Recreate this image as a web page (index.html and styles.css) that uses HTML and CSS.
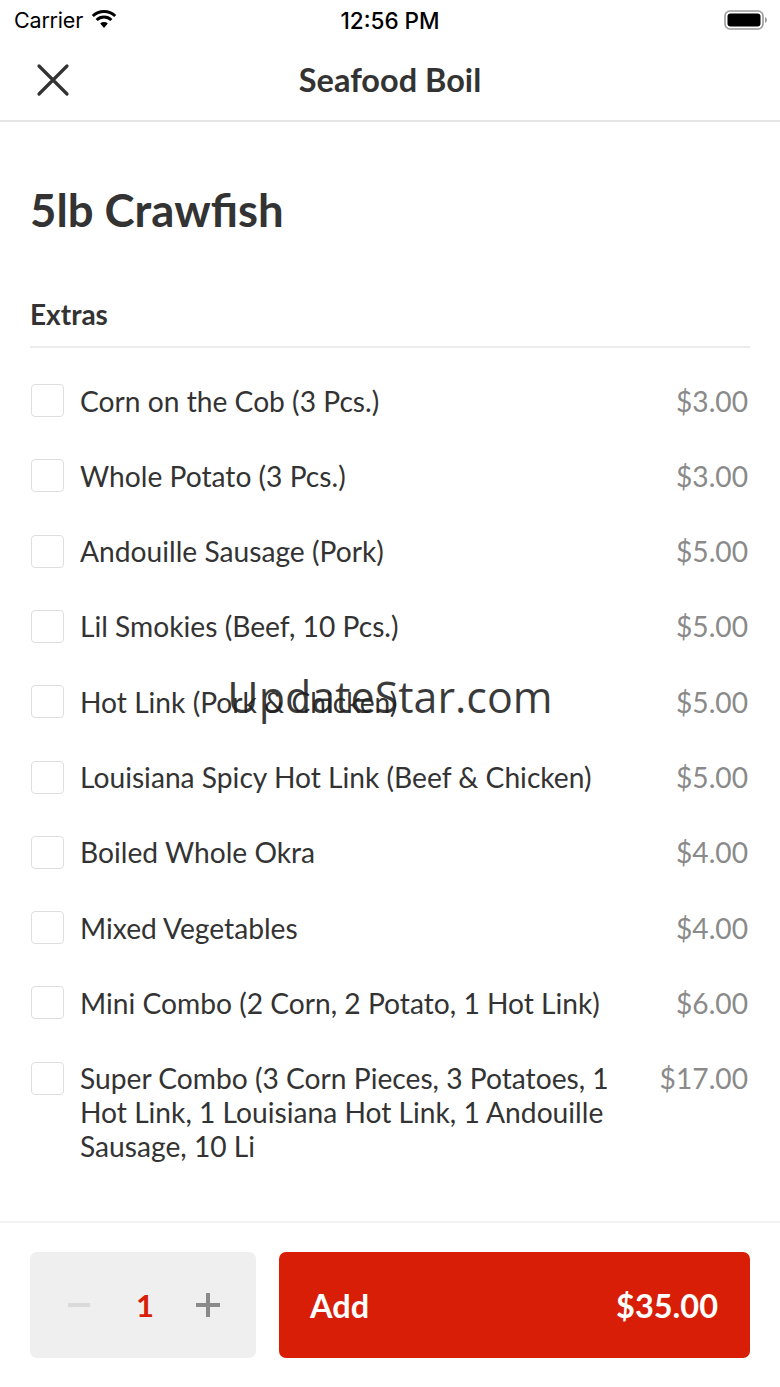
FILE: index.html
```html
<!DOCTYPE html>
<html>
<head>
<meta charset="utf-8">
<link rel="stylesheet" href="styles.css">
</head>
<body>
<div class="page">
  <div class="status">
    <div class="status-left">
      <span class="carrier">Carrier</span>
      <svg class="wifi" width="26" height="20" viewBox="0 0 26 20">
        <path d="M13 19 L9.2 14.6 A5.6 5.6 0 0 1 16.8 14.6 Z" fill="#000"/>
        <path d="M5.6 11 A10.6 10.6 0 0 1 20.4 11" stroke="#000" stroke-width="3" fill="none"/>
        <path d="M1.8 7 A16 16 0 0 1 24.2 7" stroke="#000" stroke-width="3" fill="none"/>
      </svg>
    </div>
    <div class="time">12:56 PM</div>
    <div class="status-right">
      <svg width="44" height="22" viewBox="0 0 44 22">
        <rect x="1" y="2" width="38" height="18" rx="5" fill="none" stroke="#9a9a9a" stroke-width="1.6"/>
        <rect x="3.5" y="4.5" width="33" height="13" rx="3" fill="#000"/>
        <path d="M41 8 Q43 9 43 11 Q43 13 41 14 Z" fill="#9a9a9a"/>
      </svg>
    </div>
  </div>
  <div class="nav">
    <svg class="close" width="34" height="34" viewBox="0 0 34 34">
      <path d="M3 3 L31 31 M31 3 L3 31" stroke="#333" stroke-width="3.2" stroke-linecap="round"/>
    </svg>
    <div class="nav-title">Seafood Boil</div>
  </div>
  <main class="content">
    <h1 class="item-title">5lb Crawfish</h1>
    <h2 class="section-title">Extras</h2>
    <ul class="options">
      <li class="option"><span class="check"></span><span class="label">Corn on the Cob (3 Pcs.)</span><span class="price">$3.00</span></li>
      <li class="option"><span class="check"></span><span class="label">Whole Potato (3 Pcs.)</span><span class="price">$3.00</span></li>
      <li class="option"><span class="check"></span><span class="label">Andouille Sausage (Pork)</span><span class="price">$5.00</span></li>
      <li class="option"><span class="check"></span><span class="label">Lil Smokies (Beef, 10 Pcs.)</span><span class="price">$5.00</span></li>
      <li class="option"><span class="check"></span><span class="label">Hot Link (Pork &amp; Chicken)</span><span class="price">$5.00</span></li>
      <li class="option"><span class="check"></span><span class="label">Louisiana Spicy Hot Link (Beef &amp; Chicken)</span><span class="price">$5.00</span></li>
      <li class="option"><span class="check"></span><span class="label">Boiled Whole Okra</span><span class="price">$4.00</span></li>
      <li class="option"><span class="check"></span><span class="label">Mixed Vegetables</span><span class="price">$4.00</span></li>
      <li class="option"><span class="check"></span><span class="label">Mini Combo (2 Corn, 2 Potato, 1 Hot Link)</span><span class="price">$6.00</span></li>
      <li class="option"><span class="check"></span><span class="label">Super Combo (3 Corn Pieces, 3 Potatoes, 1 Hot Link, 1 Louisiana Hot Link, 1 Andouille Sausage, 10 Li</span><span class="price">$17.00</span></li>
    </ul>
  </main>
  <footer class="footer">
    <div class="stepper">
      <span class="minus"></span>
      <span class="qty">1</span>
      <span class="plus"></span>
    </div>
    <button class="add">
      <span>Add</span>
      <span>$35.00</span>
    </button>
  </footer>
  <div class="watermark">UpdateStar.com</div>
</div>
</body>
</html>
```
FILE: styles.css
```css
* { box-sizing: border-box; }
html, body { margin: 0; padding: 0; background: #fff; }
body { font-family: Lato, "Open Sans", sans-serif; color: #333; }

.page {
  position: relative;
  width: 780px;
  height: 1387px;
  display: flex;
  flex-direction: column;
  overflow: hidden;
}

.status {
  height: 40px;
  display: flex;
  align-items: center;
  justify-content: space-between;
  padding: 0 12px 0 14px;
  font-family: Inter, "Liberation Sans", sans-serif;
  color: #000;
  position: relative;
}
.status-left { display: flex; align-items: center; gap: 8px; }
.carrier { font-size: 21.5px; letter-spacing: -0.2px; }
.wifi { margin-top: -2px; }
.time {
  position: absolute;
  left: 0; right: 0;
  text-align: center;
  font-size: 22.5px;
  font-weight: 500;
  pointer-events: none;
}
.status-right { display: flex; align-items: center; }

.nav {
  height: 82px;
  display: flex;
  align-items: center;
  justify-content: center;
  position: relative;
  border-bottom: 2px solid #e4e4e4;
}
.close { position: absolute; left: 36px; top: 23px; }
.nav-title {
  font-size: 32.5px;
  font-weight: 700;
  color: #333;
  margin-top: -2px;
}

.content {
  flex: 1;
  padding: 0 30px;
}
.item-title {
  margin: 63px 0 0 0;
  font-size: 45.5px;
  line-height: 50px;
  font-weight: 700;
  color: #333;
}
.section-title {
  margin: 63px 0 0 0;
  font-size: 28px;
  line-height: 32px;
  font-weight: 700;
  color: #333;
  padding-bottom: 16px;
}
.options {
  list-style: none;
  margin: 0;
  padding: 15px 0 0;
  border-top: 2px solid #ececec;
}
.option {
  display: flex;
  align-items: flex-start;
  padding: 20.65px 0;
  font-size: 28.2px;
  line-height: 34px;
}
.check {
  flex: none;
  width: 33px;
  height: 33px;
  margin: 0.5px 16px 0 1px;
  border: 1.5px solid #dedede;
  border-radius: 4px;
}
.label {
  flex: 1;
  color: #333;
  padding-right: 22px;
}
.price {
  flex: none;
  color: #8a8a8a;
  margin-right: 2px;
}

.footer {
  height: 166px;
  border-top: 2px solid #f2f2f2;
  padding: 29px 30px 0;
  display: flex;
  gap: 23px;
  align-items: flex-start;
}
.stepper {
  flex: none;
  width: 226px;
  height: 106px;
  border-radius: 7px;
  background: #efefef;
  display: flex;
  align-items: center;
  justify-content: space-between;
  padding: 0 36px 0 38px;
}
.minus {
  width: 22px;
  height: 4px;
  background: #dadada;
}
.qty {
  color: #d81e06;
  font-size: 31px;
  font-weight: 700;
  margin-left: 4px;
}
.plus {
  position: relative;
  width: 24px;
  height: 24px;
}
.plus::before, .plus::after {
  content: "";
  position: absolute;
  background: #8a8a8a;
}
.plus::before { left: 0; top: 10px; width: 24px; height: 4px; }
.plus::after { left: 10px; top: 0; width: 4px; height: 24px; }

.add {
  flex: 1;
  height: 106px;
  border: none;
  border-radius: 7px;
  background: #d81e06;
  color: #fff;
  font-family: Lato, sans-serif;
  font-size: 32.5px;
  font-weight: 700;
  display: flex;
  align-items: center;
  justify-content: space-between;
  padding: 0 32px 0 31px;
}

.watermark {
  position: absolute;
  left: 0;
  right: 0;
  top: 669px;
  text-align: center;
  font-family: "Open Sans", sans-serif;
  font-size: 43px;
  line-height: 56px;
  color: rgba(30, 30, 30, 0.88);
  pointer-events: none;
}
```
